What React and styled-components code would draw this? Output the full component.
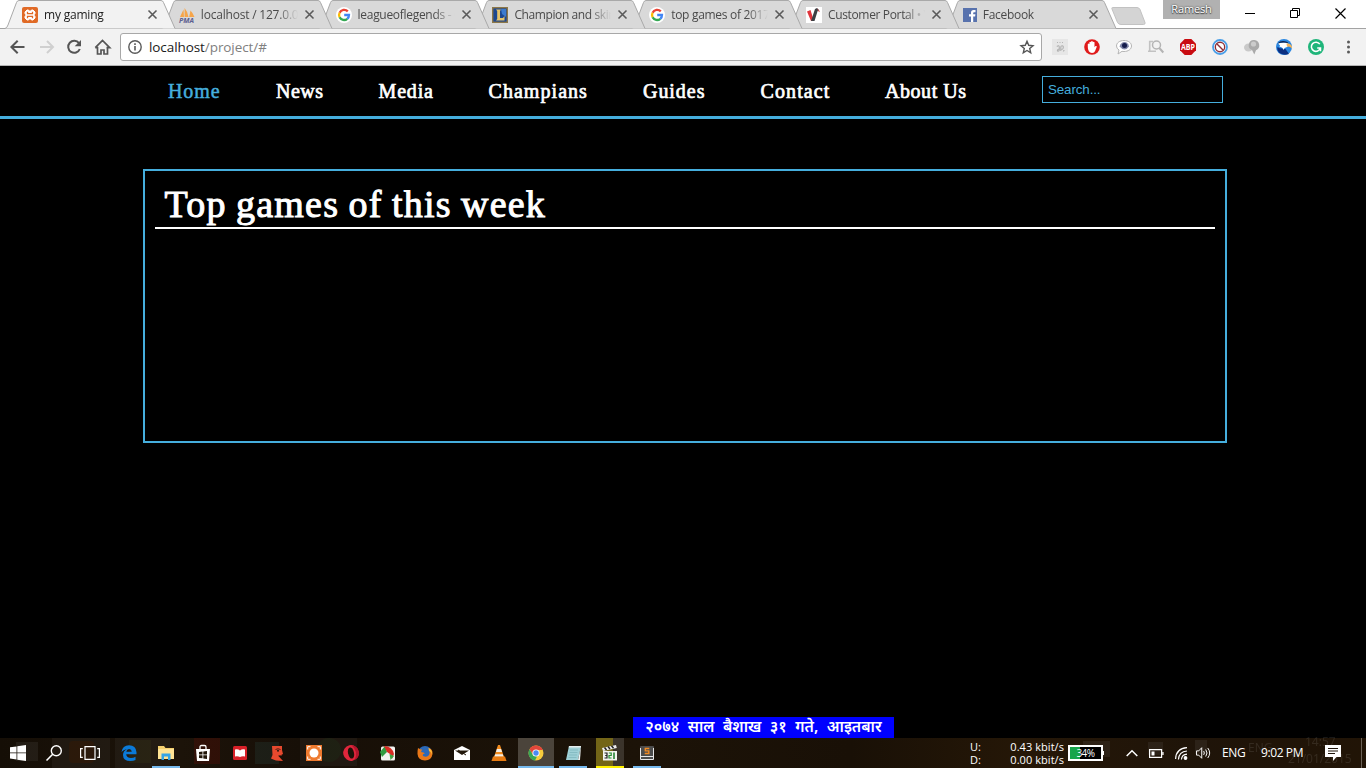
import React from 'react';
import styled, { createGlobalStyle } from 'styled-components';

const UI = '"Open Sans", "Noto Sans", sans-serif';
const BLUE = '#45aedd';

const Global = createGlobalStyle`
  * { box-sizing: border-box; }
  body { margin: 0; background: #000; overflow: hidden; }
  svg { display: block; flex: none; overflow: visible; }
`;

const Screen = styled.div`
  position: relative;
  display: flex;
  flex-direction: column;
  width: 1366px;
  height: 768px;
  overflow: hidden;
  background: #000;
  font-family: ${UI};
`;

/* ---------- browser window ---------- */

const TabStrip = styled.div`
  display: flex;
  height: 28px;
  padding: 1px 0 0 5px;
  background: #fff;
`;
const Tab = styled.div`
  position: relative;
  z-index: ${(p) => p.$z};
  display: flex;
  align-items: center;
  flex: none;
  width: 156.8px;
  height: 28px;
  padding: 0 0 1px 17px;
`;
const TabShape = styled.svg`
  position: absolute;
  left: 0;
  top: -1px;
  z-index: -1;
`;
const TabTitle = styled.span`
  width: 97px;
  margin-left: 6px;
  padding-top: 1px;
  overflow: hidden;
  white-space: nowrap;
  font-size: 12px;
  line-height: 18px;
  letter-spacing: ${(p) => p.$track}px;
  color: ${(p) => (p.$active ? '#1c1c1c' : '#4a4a4a')};
  mask-image: linear-gradient(90deg, #000 76px, transparent 97px);
`;
const TabClose = styled.svg`
  margin-left: ${(p) => (p.$narrowIcon ? 9.6 : 7)}px;
`;
const NewTab = styled.svg`
  margin: 6px 0 0 8px;
`;
const WindowButtons = styled.div`
  display: flex;
  align-items: flex-start;
  margin: -1px 0 0 auto;
  padding-right: 20px;
  gap: 35px;
`;
const UserBadge = styled.span`
  width: 57px;
  height: 19px;
  margin-right: -10px;
  background: #b1b1b1;
  color: #fff;
  font-size: 11px;
  line-height: 18px;
  text-align: center;
  letter-spacing: -0.15px;
  text-shadow: 0 0 2px #333, 0 1px 1px #444;
`;
const WinIcon = styled.svg`
  margin-top: 8px;
`;

const Toolbar = styled.div`
  position: relative;
  display: flex;
  align-items: center;
  height: 38px;
  padding: 0 8px 0 9px;
  background: #f2f2f2;
  border-top: 1px solid #a3a3a3;
  border-bottom: 1px solid #b4b4b4;
`;
const NavButtons = styled.div`
  display: flex;
  align-items: center;
  gap: 12px;
  width: 111px;
`;
const AddressBar = styled.div`
  display: flex;
  align-items: center;
  width: 922px;
  height: 28px;
  padding: 0 7px;
  background: #fff;
  border: 1px solid #a8a8a8;
  border-radius: 3px;
`;
const Url = styled.span`
  flex: 1;
  margin-left: 7px;
  font-size: 13.5px;
  line-height: 20px;
  letter-spacing: -0.08px;
  color: #808080;
  b { font-weight: 400; color: #1a1a1a; }
`;
const Extensions = styled.div`
  display: flex;
  gap: 16px;
  margin-left: 10px;
`;

/* ---------- web page ---------- */

const Page = styled.main`
  flex: 1;
  background: #000;
  font-family: "Liberation Serif", serif;
`;
const SiteHeader = styled.header`
  display: flex;
  align-items: flex-start;
  height: 53px;
  padding: 10px 143px 0 168px;
  border-bottom: 3px solid ${BLUE};
`;
const SiteNav = styled.nav`
  display: grid;
  grid-template-columns: 108px 102.5px 110px 154.5px 117.5px 124.5px 157px;
`;
const NavLink = styled.a`
  font-size: 20px;
  line-height: 30px;
  white-space: nowrap;
  letter-spacing: ${(p) => p.$track}px;
  color: ${(p) => (p.$active ? BLUE : '#fff')};
  -webkit-text-stroke: ${(p) => (p.$active ? 0.5 : 0.7)}px currentColor;
`;
const Search = styled.input`
  width: 181px;
  height: 27px;
  padding: 0 5px;
  background: #000;
  border: 1px solid ${BLUE};
  border-radius: 0;
  font: 13.33px "Liberation Sans", Arial, sans-serif;
  letter-spacing: -0.1px;
  &::placeholder { color: ${BLUE}; opacity: 1; }
`;
const Panel = styled.section`
  width: 1084px;
  height: 274px;
  margin: 50px 0 0 143px;
  padding: 8px 10px;
  border: 2px solid ${BLUE};
`;
const PanelTitle = styled.h1`
  height: 50px;
  margin: 0;
  padding-left: 9.5px;
  border-bottom: 2px solid #fff;
  color: #fff;
  font-size: 38px;
  font-weight: 400;
  line-height: 50px;
  letter-spacing: 1.2px;
  word-spacing: -1.3px;
  -webkit-text-stroke: 1px #fff;
`;

/* ---------- desktop ---------- */

const DateBanner = styled.div`
  position: absolute;
  left: 633px;
  bottom: 30px;
  width: 261px;
  height: 21px;
  background: #0000ff;
  color: #fff;
  font-family: "Noto Sans", "Noto Sans Devanagari", sans-serif;
  font-size: 15.6px;
  font-weight: 600;
  line-height: 19px;
  text-align: center;
  white-space: nowrap;
  word-spacing: 4.4px;
`;
const Taskbar = styled.footer`
  position: relative;
  display: flex;
  flex: none;
  height: 30px;
  background: linear-gradient(90deg, #150e06 0, #1c1309 180px, #170f07 300px, #1c1308 640px, #191006 850px, #251707 1020px, #1f1409 1200px, #211406 1366px);
  color: #fff;
`;
const Ghosts = styled.svg`
  position: absolute;
  left: 0;
  top: 0;
`;
const TaskCell = styled.div`
  position: relative;
  display: flex;
  align-items: center;
  justify-content: center;
  width: ${(p) => p.$w || 36}px;
  height: 30px;
  margin-right: ${(p) => (p.$w ? 0 : 1)}px;
  background: ${(p) => p.$bg || 'transparent'};
  &::after {
    content: '';
    position: absolute;
    bottom: 0;
    left: ${(p) => (p.$full ? 0 : 4)}px;
    right: ${(p) => (p.$full ? 0 : 4)}px;
    height: 2px;
    background: ${(p) => p.$line || 'transparent'};
  }
`;
const Spacer = styled.div`
  width: ${(p) => p.$w}px;
`;
const Tray = styled.div`
  position: relative;
  display: flex;
  align-items: center;
  margin-left: auto;
  width: 396px;
  font-size: 12px;
`;
const NetSpeed = styled.div`
  display: grid;
  grid-template-columns: 20px 74px;
  width: 94px;
  font-size: 11px;
  line-height: 13px;
  span:nth-child(even) { text-align: right; letter-spacing: 0.05px; }
`;
const BatteryMeter = styled.div`
  position: relative;
  width: 35px;
  height: 16px;
  margin-left: 4px;
  border: 2px solid #fff;
  background: linear-gradient(90deg, #17a54a 10px, #000 10px);
  font-size: 10px;
  line-height: 12px;
  text-align: center;
  letter-spacing: -0.5px;
  &::after {
    content: '';
    position: absolute;
    right: -3px;
    top: 4px;
    width: 1px;
    height: 4px;
    background: #fff;
  }
`;
const TrayText = styled.span`
  width: ${(p) => p.$w}px;
  margin-left: ${(p) => p.$ml}px;
  padding-bottom: 1px;
  white-space: nowrap;
  letter-spacing: ${(p) => p.$track}px;
`;
const TrayIcon = styled.div`
  width: ${(p) => p.$w}px;
  margin-left: ${(p) => p.$ml}px;
`;
const ShowDesktop = styled.div`
  width: 1px;
  height: 30px;
  margin-left: auto;
  margin-right: 4px;
  background: #6b6156;
`;

/* ---------- icons ---------- */

const Icon = ({ s = 16, children }) => (
  <svg width={s} height={s} viewBox={`0 0 ${s} ${s}`} fill="none">{children}</svg>
);

const Xampp = () => (
  <Icon>
    <rect width="16" height="16" rx="2" fill="#e06a26" />
    <rect x="4" y="4" width="8" height="8" fill="#fff" />
    <path d="M5 3h1.500L8 4.500 9.500 3H11l2 2v1.500L11.800 8 13 9.500V11l-2 2H9.500L8 11.500 6.500 13H5l-2-2V9.500L4.200 8 3 6.500V5z" fill="#fff" stroke="#fff" strokeLinejoin="round" />
    <path d="M5.500 4.800v1.900h5V4.800M5.500 11.200V9.300h5v1.900" stroke="#e06a26" strokeWidth="1.300" />
  </Icon>
);
const PmaText = styled.text`
  font: italic 700 6.5px ${UI};
  fill: #5c6090;
`;
const Pma = () => (
  <Icon>
    <path d="M1 10 4.500 2.500 5 10zM5.600 10V1Q9 5 9.500 10zM10.200 10 11.500 3.500Q14 6 15.500 10z" fill="#f6a54a" />
    <PmaText x="0" y="15.500" textLength="15" lengthAdjust="spacingAndGlyphs">PMA</PmaText>
  </Icon>
);
const Google = () => (
  <Icon>
    <circle cx="8" cy="8" r="8" fill="#fff" />
    <g strokeWidth="2.300">
      <path d="M11.800 4.400A5 5 0 0 0 3.600 5.700" stroke="#ea4335" />
      <path d="M3.600 5.700a5 5 0 0 0 0 4.600" stroke="#fbbc05" />
      <path d="M3.600 10.300a5 5 0 0 0 7.700 1.500" stroke="#34a853" />
      <path d="M11.300 11.800A5 5 0 0 0 13 8H8.200" stroke="#4285f4" />
    </g>
  </Icon>
);
const League = () => (
  <Icon>
    <rect x=".7" y=".7" width="14.600" height="14.600" fill="#1c4790" stroke="#8c7748" strokeWidth="1.400" />
    <path d="M9 2h5v8l-4-3z" fill="#3b7bd0" />
    <path d="M4 2.500h5L8 4v7h3l1.500-2v4.500H4L5.200 12V4z" fill="#e5c36a" />
  </Icon>
);
const Portal = () => (
  <Icon>
    <rect width="16" height="16" fill="#fff" />
    <path d="M1 4.500 4.500 3 6.500 9.500 8 14H5z" fill="#e0353c" />
    <path d="M5 14 9 2l2-1 2.500 2.500-1.800.3L8.500 14z" fill="#3d4044" />
    <path d="m11 1 3 4-1.500-.5z" fill="#e0353c" />
  </Icon>
);
const Facebook = () => (
  <Icon s={14}>
    <rect width="14" height="14" fill="#5872ad" />
    <path d="M8 14V8.500H6V6.200h2V4.500Q8 2 10.500 2h2v2.200H11q-.8 0-.8.800v1.200h2.200l-.3 2.300h-1.900V14z" fill="#fff" />
  </Icon>
);

const Back = () => <Icon s={18}><path d="M15.500 9H2.500M8.700 2.700 2.400 9l6.300 6.300" stroke="#555" strokeWidth="2" /></Icon>;
const Forward = () => <Icon s={16}><path d="M1 8h13M8 2l6 6-6 6" stroke="#d0d0d0" strokeWidth="2" /></Icon>;
const Reload = () => (
  <Icon s={16}>
    <path d="M12 4.200A6 6 0 1 0 12.800 10" stroke="#555" strokeWidth="2" />
    <path d="M14 1v6.300H7.700z" fill="#555" />
  </Icon>
);
const Home = () => <Icon s={16}><path d="M2.500 8v7H6v-4h3v4h3.500V8M.3 8.700 7.500 1.500l7.200 7.200h-3.200M.3 8.700h3" stroke="#555" strokeWidth="1.700" /></Icon>;
const Info = () => (
  <Icon s={14}>
    <circle cx="7" cy="7" r="6.200" stroke="#5a5a5a" strokeWidth="1.400" />
    <path d="M7 6v4.500M7 3.300v1.600" stroke="#5a5a5a" strokeWidth="1.600" />
  </Icon>
);
const Star = () => <Icon s={14}><path d="m7 1.300 1.700 4 4.300.4-3.300 2.800 1 4.300L7 10.500l-3.700 2.300 1-4.300L1 5.700l4.300-.4z" stroke="#555" strokeWidth="1.400" /></Icon>;

const BadgeText = styled.text`
  font: 700 ${(p) => p.$size}px ${UI};
  text-anchor: middle;
  fill: ${(p) => p.$fill};
`;

const extensionIcons = [
  <Icon key="n"><rect width="16" height="16" fill="#e6e6e6" /><path d="M5 3.500h1m1.500 0h1m1.500 0h1" stroke="#b4b4b4" /><path d="M4.800 7.500q2.500-2 2.500 1v2q0 2-1.800 1.500-.5-1.500 1.500-2M8.800 12V8.200q0-1.500 1.400-1.400 1.500.2 1 2.200-.2 1.500-1.700 1.300M11 12q1 .2 1-1" stroke="#b0b0b0" strokeWidth="1.100" /></Icon>,
  <Icon key="hand"><circle cx="8" cy="8" r="7.800" fill="#e01b1b" /><path d="M3.800 8V5q.8-.9 1.600 0v2.500V3.300q.8-.9 1.700 0V7 2.500q.8-.9 1.700 0V7 3.300q.8-.9 1.700 0v5l1-1.300q1-.3 1.400.5l-1.800 4.500Q10.500 14 8 14q-4.200-.5-4.200-6z" fill="#fff" /></Icon>,
  <Icon key="eye"><path d="M8 1.500c4.300 0 7.500 2.300 7.500 5.500S12.300 12.500 8 12.500q-1 0-2-.2L2 15l1-4Q.5 9.500.5 7C.5 3.800 3.700 1.500 8 1.500z" fill="#fff" stroke="#b5b5b5" /><path d="M3.500 7.500Q5 3 8.500 3t4.500 4.500q-2 3-4.500 3t-5-3z" fill="#8288a8" /><circle cx="8.500" cy="6.500" r="2.500" fill="#161d4c" /></Icon>,
  <Icon key="find"><path d="M5 2.500H1.700v9.700H0h8" stroke="#c2c2c2" strokeWidth="1.600" /><circle cx="8.500" cy="6" r="4" fill="#f2f2f2" stroke="#b4b4b4" strokeWidth="1.500" /><path d="m11.300 9 4 4.500" stroke="#b4b4b4" strokeWidth="2" /></Icon>,
  <Icon key="abp"><path d="M4.700 0h6.600L16 4.700v6.600L11.300 16H4.700L0 11.300V4.700z" fill="#c90c12" /><BadgeText x="8" y="11" $size={8} $fill="#fff" textLength="14" lengthAdjust="spacingAndGlyphs">ABP</BadgeText></Icon>,
  <Icon key="block"><circle cx="8" cy="8" r="7" fill="#fff" stroke="#4a9fe8" strokeWidth="1.800" /><circle cx="8" cy="8" r="4.700" stroke="#8e2f38" strokeWidth="1.400" /><path d="m4.800 4.800 6.400 6.400" stroke="#8e2f38" strokeWidth="1.400" /></Icon>,
  <Icon key="pin"><ellipse cx="4.500" cy="8.500" rx="4.500" ry="4" fill="#c9c9c9" /><path d="M10.500 1a5.400 5.400 0 0 1 1.500 10.300L10.300 15.500 8 11a5.200 5.200 0 0 1 2.500-10z" fill="#aaa" /><circle cx="9.500" cy="5" r="2.600" fill="#ccc" /></Icon>,
  <Icon key="eagle"><circle cx="8" cy="8" r="8" fill="#2a86e0" /><path d="M1.500 8q2 1.500 5 1.500l3 .5 3.500 5Q8 17 3.500 14 .5 11 1.500 8z" fill="#0c2f80" /><path d="M2 4.500Q7 3 11 3.700L14 6l-3 2q-3 .5-3.500 3Q7 8 3 7.500 5.500 7 2 4.500z" fill="#fff" /><path d="M1.500 4.500Q5 1 10 2.500q2 .5 2.500 2Q8 2.500 1.500 4.500z" fill="#0d1f48" /><path d="M10.500 4.500q4-.6 5.500 3v2q-2-2.300-5-1.800z" fill="#f3b45c" /></Icon>,
  <Icon key="gram"><circle cx="8" cy="8" r="8" fill="#1fb57a" /><path d="M11.800 5.200A4.600 4.600 0 1 0 12.400 9H9.200M12.500 12.300V9" stroke="#fff" strokeWidth="1.500" /></Icon>,
  <Icon key="menu"><g fill="#5a5a5a"><circle cx="8.500" cy="3" r="1.500" /><circle cx="8.500" cy="8" r="1.500" /><circle cx="8.500" cy="13" r="1.500" /></g></Icon>,
];

const Chrome = () => (
  <Icon>
    <circle cx="8" cy="8" r="7.500" fill="#f7cb3d" />
    <path d="M1.500 4.200A7.500 7.500 0 0 1 14.800 5H8L5 9.500z" fill="#e2463b" />
    <path d="M1.500 4.200 5 10l4 1.500-2 4A7.500 7.500 0 0 1 1.500 4.200z" fill="#3aa757" />
    <circle cx="8" cy="8" r="3.600" fill="#fff" />
    <circle cx="8" cy="8" r="2.700" fill="#4a8af4" />
  </Icon>
);

const tasks = [
  { w: 36, icon: <Icon><path d="M0 2.300 6.500 1.400v6.100H0zM7.300 1.300 16 0v7.500H7.300zM0 8.300h6.500v6.200L0 13.600zM7.300 8.300H16V16l-8.700-1.300z" fill="#fff" /></Icon> },
  { w: 35, icon: <Icon><circle cx="10.300" cy="5.700" r="5" stroke="#fff" strokeWidth="1.400" /><path d="M6.700 9.300.5 15.500" stroke="#fff" strokeWidth="1.600" /></Icon> },
  { w: 38, icon: <svg width="20" height="14" fill="none" stroke="#fff" strokeWidth="1.200"><path d="M5 .6h10v12.800H5zM2.800 2.600H.6v8.800h2.200M17.200 2.600h2.200v8.800h-2.200" /></svg> },
  { gap: 2 },
  { icon: <Icon><path d="M.5 7Q1.500.5 8 .3q7 .2 7.500 7v2H5.200Q5.500 13 10 13q2.500 0 4.500-1.200V15q-2 1-5 1Q2 16 2 10q0-4 4-6Q2 5 .5 7zM5.300 6.700h5.500Q10.500 4 8.200 4 5.800 4 5.300 6.700z" fill="#0b7ad8" /></Icon> },
  { line: '#76b9ed', icon: <Icon><path d="M0 1h6l1.500 2H16v11H0z" fill="#f5d06f" /><path d="M0 4h16v10H0z" fill="#ffe394" /><path d="M3.500 15V8.500h9V15H10v-3.500H6V15z" fill="#37a4e4" /></Icon> },
  { icon: <Icon><path d="M5 4V2q0-1.500 1.500-1.500h3Q11 .5 11 2v2" stroke="#fff" strokeWidth="1.300" /><path d="M1 4h14l-1 12H2z" fill="#fff" /><path d="m4 7 3.500-.5v3H4zM8.300 6.400 12 6v3.500H8.300zM4 10.300h3.500v3L4 13zM8.300 10.300H12V14l-3.700-.5z" fill="#211609" /></Icon> },
  { icon: <Icon s={14}><rect width="14" height="14" rx="1.500" fill="#d82028" /><path d="M2 3.500Q5 2.800 7 4.500 9 2.800 12 3.500V10.500Q9 10 7 11 5 10 2 10.500z" fill="#fff" /></Icon> },
  { icon: <Icon s={14}><path d="M2 0h10v4l1 4-1.500.7V10H8.500L13 15Q5 15 1 12.500L2.500 9z" fill="#e7492e" /><path d="M5.500 3.500q2.500-1.500 5 0" stroke="#2b1510" strokeWidth=".8" /><circle cx="8" cy="4.800" r="1" fill="#2b1510" /><path d="M8.500 9.700h3" stroke="#2b1510" strokeWidth=".8" /></Icon> },
  { icon: <Icon><rect width="16" height="16" fill="#ee7a2f" /><circle cx="8" cy="8" r="4.500" fill="#fff" /><path d="M1.700 4.500V1.700h2.800M11.500 1.700h2.800v2.800M14.300 11.500v2.800h-2.800M4.500 14.300H1.700v-2.800" stroke="#fff" /></Icon> },
  { icon: <Icon><g transform="rotate(-12 8 8)"><ellipse cx="8" cy="8" rx="7.800" ry="7.900" fill="#e0263c" /><path d="M10 .5Q15.800 2 15.800 8T10 15.600Q13 12 13 8T10 .5z" fill="#b3152c" /><ellipse cx="8" cy="8" rx="3" ry="5.700" fill="#1c1309" /></g></Icon> },
  { icon: <Icon><rect x="1" y="1.500" width="14" height="14" rx="1.500" fill="#f3f3f0" /><path d="m0 7 5-6 2 6-5 5z" fill="#319a40" /><path d="M4 1q8 0 10 8l-2 5-2-5-3-2z" fill="#d82b22" /><path d="m9.500 9 1 6 3.500-4z" fill="#3da645" /></Icon> },
  { icon: <Icon><circle cx="8" cy="8" r="7" fill="#2b69b8" /><path d="M1 3q2 1.500 4 1.500L4 7q3 0 4 1.500Q5 9 6 11q4 2 6-1 1.500-3-.5-7Q16 4 15.500 9 14.500 15.500 8 15.500 1 15 .5 9q0-4 .5-6z" fill="#e97818" /><path d="M11.500 3Q16 5 15 11q0-4-3-5z" fill="#f8be3d" /></Icon> },
  { icon: <Icon><path d="M0 5 8 1l8 4v10H0z" fill="#fff" /><path d="M1 5.500h14L8 10z" fill="#21170a" /><path d="m4 5 8 5" stroke="#21170a" /></Icon> },
  { icon: <Icon><path d="M7 0h2l4 12H3z" fill="#f28b1d" /><path d="M5.900 4h4.200l1 3H5zM4.200 9.200h7.600l.8 2.500H3.400z" fill="#f3eee5" /><path d="M2 11.500h12l1.500 4.500H.5z" fill="#e97c12" /></Icon> },
  { bg: '#4b443b', line: '#76b9ed', full: true, icon: <Chrome /> },
  { line: '#76b9ed', icon: <Icon><path d="M4 1h12l-3 14H1z" fill="#9ed0d6" /><path d="M4 1h12v1.500H3.700z" fill="#e5edee" /><path d="M5 5h8M4.500 7.500h8M4 10h8M3.500 12.500h8" stroke="#7fb6be" strokeWidth=".8" /><path d="m16 1-1 14h-2z" fill="#eef4f4" /></Icon> },
  { bg: 'linear-gradient(90deg, transparent 4px, #736517 4px, #736517 21px, #3b342b 21px, #3b342b 32px, transparent 32px)', line: '#fff200', icon: <Icon><path d="m0 3 14-3 .8 3L1 6z" fill="#eee" /><path d="m2.500 2.500 2 2.500m1.500-3.500 2 2.500m1.500-3.300 2 2.500" stroke="#222" strokeWidth="1.500" /><rect x="1" y="6" width="14" height="9.500" fill="#f3f3ee" /><path d="M2.500 8H5v2.500H3.200m1.800 0V13H2.500" stroke="#222" strokeWidth="1.200" /><path d="M6.800 8h2.400v2.500H7V13h2.500" stroke="#218b2e" strokeWidth="1.200" /><path d="M12 7.500V14" stroke="#1a7d29" strokeWidth="1.500" /></Icon> },
  { line: '#76b9ed', icon: <Icon s={14}><rect width="14" height="13" rx="1" fill="#4c4c4c" /><path d="M.5 2v11.500h13V2M.5 10.500h13" stroke="#e6e6e6" /><path d="M9.300 2.500H5.300v2.400h3.500v2.600H4.700" stroke="#f28a20" strokeWidth="1.400" /></Icon> },
];

const tabs = [
  { title: 'my gaming', icon: <Xampp />, track: -0.2, active: true },
  { title: 'localhost / 127.0.0.1', icon: <Pma />, track: -0.2 },
  { title: 'leagueoflegends - Google', icon: <Google />, track: -0.3 },
  { title: 'Champion and skin', icon: <League />, track: -0.4 },
  { title: 'top games of 2017', icon: <Google />, track: -0.3 },
  { title: 'Customer Portal • V', icon: <Portal />, track: -0.35 },
  { title: 'Facebook', icon: <Facebook />, track: -0.3, narrow: true },
];

const links = [
  ['Home', 0.9], ['News', 0.5], ['Media', 0.85], ['Champians', 1.05],
  ['Guides', 0.95], ['Contact', 1.1], ['About Us', 0.55],
];

const GhostText = styled.text`
  font: 12px ${UI};
  fill: #fff;
`;

export default function App() {
  return (
    <Screen>
      <Global />
      <TabStrip>
        {tabs.map((t, i) => (
          <Tab key={t.title} $z={10 - i}>
            <TabShape width="170" height="29">
              <path d="M0 28.500Q2 28 3 25L11.500 2.500Q12.300.5 14 .5H156Q157.800.5 158.500 2.500L170 28.500z" fill={t.active ? '#f2f2f2' : '#d9d9d9'} />
              <path d="M0 28.500Q2 28 3 25L11.500 2.500Q12.300.5 14 .5H156Q157.800.5 158.500 2.500L170 28.500" fill="none" stroke="#a9a9a9" />
            </TabShape>
            {t.icon}
            <TabTitle $active={t.active} $track={t.track}>{t.title}</TabTitle>
            <TabClose $narrowIcon={t.narrow} width="9" height="9"><path d="m.5.5 8 8m0-8-8 8" stroke="#5a5a5a" strokeWidth="1.600" /></TabClose>
          </Tab>
        ))}
        <NewTab width="36" height="18"><path d="M1.500.5H26q2 0 3 2l5 13q.5 2-1.500 2H10q-2.500 0-3.500-2L1 2Q.5.500 1.500.500z" fill="#d4d4d4" stroke="#c2c2c2" /></NewTab>
        <WindowButtons>
          <UserBadge>Ramesh</UserBadge>
          <WinIcon width="10" height="11"><path d="M0 5.500h10" stroke="#000" /></WinIcon>
          <WinIcon width="10" height="11"><path d="M.5 2.500h7v7h-7zM2.500 2.500v-2h7v7h-2" fill="none" stroke="#000" /></WinIcon>
          <WinIcon width="11" height="11"><path d="m.5.500 10 10m0-10-10 10" stroke="#000" strokeWidth="1.200" /></WinIcon>
        </WindowButtons>
      </TabStrip>
      <Toolbar>
        <NavButtons><Back /><Forward /><Reload /><Home /></NavButtons>
        <AddressBar>
          <Info />
          <Url><b>localhost</b>/project/#</Url>
          <Star />
        </AddressBar>
        <Extensions>{extensionIcons}</Extensions>
      </Toolbar>

      <Page>
        <SiteHeader>
          <SiteNav>
            {links.map(([label, track], i) => (
              <NavLink key={label} $active={i === 0} $track={track}>{label}</NavLink>
            ))}
          </SiteNav>
          <Search placeholder="Search..." />
        </SiteHeader>
        <Panel>
          <PanelTitle>Top games of this week</PanelTitle>
        </Panel>
      </Page>

      <DateBanner>२०७४ साल बैशाख ३१ गते, आइतबार</DateBanner>

      <Taskbar>
        <Ghosts width="1366" height="30">
          <g opacity=".09">
            <path d="M16 4h22v19H16z" fill="#aaa" />
            <path d="M52 0h58v30H52zM115 0h55v30h-55zM300 0h57v28h-57z" fill="#777" />
            <rect x="69" y="3" width="25" height="22" rx="4" fill="#e8702a" />
            <rect x="129" y="2" width="22" height="23" fill="#b5d080" />
            <rect x="194" y="0" width="26" height="26" fill="#f00" />
            <rect x="255" y="4" width="24" height="22" fill="#4aa" />
            <circle cx="329" cy="12" r="12" fill="#6c8" />
            <rect x="1083" y="3" width="27" height="16" fill="#aaa" />
            <path d="M1148 4h15v13h-15zM1195 2h12v14h-12z" fill="#aaa" />
            <GhostText x="1248" y="14">ENG</GhostText>
            <GhostText x="1305" y="8">14:57</GhostText>
            <GhostText x="1288" y="25">21/01/2015</GhostText>
          </g>
        </Ghosts>
        {tasks.map((t, i) => (t.gap
          ? <Spacer key={i} $w={t.gap} />
          : <TaskCell key={i} $w={t.w} $bg={t.bg} $line={t.line} $full={t.full}>{t.icon}</TaskCell>
        ))}
        <Tray>
          <NetSpeed>
            <span>U:</span><span>0.43 kbit/s</span>
            <span>D:</span><span>0.00 kbit/s</span>
          </NetSpeed>
          <BatteryMeter>34%</BatteryMeter>
          <TrayIcon $w={12} $ml={23}><svg width="12" height="8"><path d="m.7 7 5.300-5.300L11.300 7" fill="none" stroke="#fff" strokeWidth="1.500" /></svg></TrayIcon>
          <TrayIcon $w={15} $ml={11}><svg width="15" height="9" fill="none"><path d="M.6.600h12v7.800H.6zM14 3v3" stroke="#fff" strokeWidth="1.200" /><path d="M2.500 2.500h3v4h-3z" fill="#fff" /></svg></TrayIcon>
          <TrayIcon $w={12} $ml={11}><svg width="12" height="13" fill="none" stroke="#fff" strokeWidth="1.200"><path d="M.6 12Q1 1.500 12 .7M3.400 12.500Q4 4.500 12 4M6.400 12.500Q7 7.500 12 7.200" /><circle cx="10.500" cy="11" r="1.300" fill="#fff" /></svg></TrayIcon>
          <TrayIcon $w={17} $ml={9}><svg width="15" height="14" viewBox="0 0 17 14" fill="none" stroke="#fff" strokeWidth="1.100"><path d="M.6 4.600h2.500L6.500 1v12L3.100 9.400H.6zM8.700 4.800q1.500 2.200 0 4.400M11 3q3 4 0 8M13.300 1.300q4.400 5.700 0 11.400" /></svg></TrayIcon>
          <TrayText $w={24} $ml={9} $track={-0.3}>ENG</TrayText>
          <TrayText $w={43} $ml={15} $track={-0.4}>9:02 PM</TrayText>
          <TrayIcon $w={16} $ml={21}><svg width="16" height="16"><path d="M0 0h16v12h-4.500L8 16v-4H0z" fill="#fff" /><path d="M3 3.500h10M3 6h10M3 8.500h7" stroke="#1f1409" /></svg></TrayIcon>
          <ShowDesktop />
        </Tray>
      </Taskbar>
    </Screen>
  );
}
